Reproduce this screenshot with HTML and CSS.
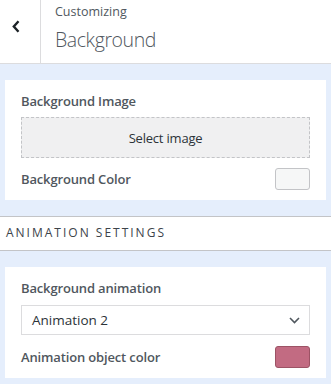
FILE: index.html
```html
<!DOCTYPE html>
<html>
<head>
<meta charset="utf-8">
<link rel="stylesheet" href="styles.css">
</head>
<body>
<header class="header">
  <div class="back">
    <svg width="8" height="13" viewBox="0 0 8 13"><polyline points="6.5,1.2 1.8,6.5 6.5,11.8" fill="none" stroke="#1d2327" stroke-width="2.4"/></svg>
  </div>
  <div class="titles">
    <div class="crumb">Customizing</div>
    <div class="title">Background</div>
  </div>
</header>

<section class="card">
  <div class="label">Background Image</div>
  <div class="upload">Select image</div>
  <div class="row">
    <div class="label">Background Color</div>
    <div class="swatch swatch-empty"></div>
  </div>
</section>

<div class="heading">Animation Settings</div>

<section class="card">
  <div class="label">Background animation</div>
  <div class="select">
    <span>Animation 2</span>
    <svg width="11" height="7" viewBox="0 0 11 7"><polyline points="1,1 5.5,5.5 10,1" fill="none" stroke="#50575e" stroke-width="1.6"/></svg>
  </div>
  <div class="row row2">
    <div class="label">Animation object color</div>
    <div class="swatch swatch-pink"></div>
  </div>
</section>
</body>
</html>
```

FILE: styles.css
```css
html, body {
  margin: 0;
  padding: 0;
}
body {
  background: #e5eefc;
  font-family: "Open Sans", "Noto Sans", sans-serif;
  color: #50575e;
  width: 331px;
  height: 384px;
  overflow: hidden;
}
.header {
  display: flex;
  height: 63px;
  background: #fff;
  border-bottom: 1px solid #dcdcde;
}
.back {
  box-sizing: border-box;
  width: 41px;
  border-right: 1px solid #dcdcde;
  padding: 20px 0 0 12px;
}
.back svg {
  display: block;
}
.titles {
  padding: 4px 0 0 14px;
}
.crumb {
  font-size: 12.5px;
  line-height: 16px;
  color: #50575e;
}
.title {
  margin-top: 7px;
  font-size: 19.5px;
  line-height: 26px;
  font-weight: 300;
  letter-spacing: -0.4px;
  color: #50575e;
}
.card {
  margin: 16px 5px 0;
  background: #fff;
  padding: 11px 16px 10px;
}
.label {
  font-size: 13px;
  line-height: 20px;
  font-weight: 600;
  letter-spacing: -0.15px;
  color: #50575e;
}
.upload {
  margin-top: 6px;
  height: 39px;
  border: 1px dashed #c3c4c7;
  background: #f0f0f1;
  display: flex;
  align-items: center;
  justify-content: center;
  font-size: 13px;
  line-height: 20px;
  letter-spacing: -0.2px;
  color: #2c3338;
}
.row {
  margin-top: 10px;
  display: flex;
  align-items: center;
  justify-content: space-between;
}
.row2 {
  margin-top: 11px;
}
.swatch {
  width: 35px;
  height: 22px;
  box-sizing: border-box;
  border-radius: 3px;
}
.swatch-empty {
  background: #f6f7f7;
  border: 1px solid #c3c4c7;
}
.swatch-pink {
  background: #c26b82;
  border: 1px solid #9c5365;
}
.heading {
  margin-top: 16px;
  background: #fff;
  border-top: 1px solid #c3c4c7;
  border-bottom: 1px solid #c3c4c7;
  height: 33px;
  padding: 0 6px;
  font-size: 12px;
  line-height: 31px;
  letter-spacing: 2px;
  text-transform: uppercase;
  color: #3c434a;
}
.select {
  margin-top: 7px;
  height: 28px;
  border: 1px solid #dcdcde;
  display: flex;
  align-items: center;
  justify-content: space-between;
  padding: 0 9px 0 10px;
  font-size: 13.5px;
  line-height: 20px;
  color: #2c3338;
}
```
